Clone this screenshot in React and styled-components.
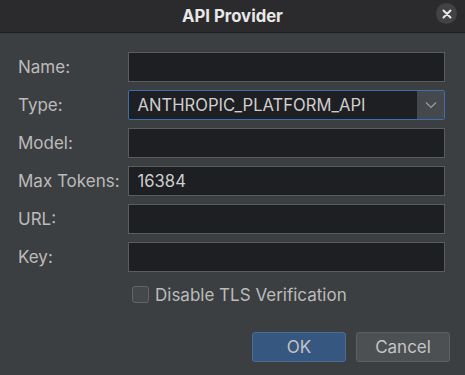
import React from 'react'
import styled, { createGlobalStyle } from 'styled-components'

const GlobalStyle = createGlobalStyle`
  html, body {
    margin: 0;
    padding: 0;
    background: #3c3f41;
  }
  body {
    font-family: Inter, "Noto Sans", sans-serif;
  }
`

const Window = styled.div`
  width: 465px;
  height: 375px;
  background: #3c3f41;
  display: flex;
  flex-direction: column;
  overflow: hidden;
`

const TitleBar = styled.div`
  height: 32px;
  flex: none;
  background: #2b2b2d;
  border-bottom: 1px solid #1f1f21;
  display: flex;
  align-items: center;
  justify-content: center;
  position: relative;
`

const Title = styled.div`
  color: #e8e8e8;
  font-size: 16.7px;
  font-weight: 700;
`

const CloseButton = styled.div`
  position: absolute;
  right: 8px;
  top: 3px;
  width: 21px;
  height: 21px;
  border-radius: 50%;
  background: #424245;
  display: flex;
  align-items: center;
  justify-content: center;
`

const Form = styled.div`
  padding: 19px 20px 0 18px;
  display: grid;
  grid-template-columns: auto 1fr;
  column-gap: 8px;
  row-gap: 8px;
`

const Label = styled.div`
  color: #bbbbbb;
  font-size: 17px;
  display: flex;
  align-items: center;
  height: 30px;
`

const Field = styled.div`
  height: 30px;
  box-sizing: border-box;
  background: #1e1f22;
  border: 1px solid ${p => (p.focused ? '#3d6fb0' : '#5a5c60')};
  border-radius: ${p => (p.focused ? '2px' : '0')};
  color: #cfcfcf;
  font-size: 16.6px;
  display: flex;
  align-items: center;
  padding-left: 9px;
`

const FieldText = styled.span`
  flex: 1;
`

const Arrow = styled.div`
  width: 27px;
  align-self: stretch;
  background: #45484c;
  display: flex;
  align-items: center;
  justify-content: center;
`

const CheckRow = styled.label`
  display: flex;
  align-items: center;
  gap: 6px;
  height: 17px;
  margin: 14px 0 0 132px;
  color: #bbbbbb;
  font-size: 17px;
`

const Box = styled.span`
  width: 17px;
  height: 17px;
  box-sizing: border-box;
  border: 1px solid #626567;
  border-radius: 3px;
  background: #44484a;
`

const Buttons = styled.div`
  display: flex;
  justify-content: flex-end;
  gap: 10px;
  padding: 0 15px 0 0;
  margin-top: 29px;
`

const Button = styled.div`
  width: 94px;
  height: 30px;
  box-sizing: border-box;
  border-radius: 3px;
  display: flex;
  align-items: center;
  justify-content: center;
  font-size: 17px;
  color: #c4c4c4;
  background: ${p => (p.primary ? '#365880' : '#4c5052')};
  border: 1px solid ${p => (p.primary ? '#4a6d94' : '#5e6062')};
`

const fields = [
  { label: 'Name:', value: '' },
  { label: 'Type:', value: 'ANTHROPIC_PLATFORM_API', select: true },
  { label: 'Model:', value: '' },
  { label: 'Max Tokens:', value: '16384' },
  { label: 'URL:', value: '' },
  { label: 'Key:', value: '' },
]

export default function App() {
  return (
    <Window>
      <GlobalStyle />
      <TitleBar>
        <Title>API Provider</Title>
        <CloseButton>
          <svg width="10" height="10" viewBox="0 0 10 10">
            <path d="M1.5 1.5 L8.5 8.5 M8.5 1.5 L1.5 8.5" stroke="#e8e8e8" strokeWidth="2" strokeLinecap="round" />
          </svg>
        </CloseButton>
      </TitleBar>
      <Form>
        {fields.map(f => (
          <React.Fragment key={f.label}>
            <Label>{f.label}</Label>
            <Field focused={f.select}>
              <FieldText>{f.value}</FieldText>
              {f.select && (
                <Arrow>
                  <svg width="12" height="8" viewBox="0 0 12 8">
                    <path d="M1 1.5 L6 6.5 L11 1.5" stroke="#9a9ca0" strokeWidth="1.2" fill="none" />
                  </svg>
                </Arrow>
              )}
            </Field>
          </React.Fragment>
        ))}
      </Form>
      <CheckRow>
        <Box />
        Disable TLS Verification
      </CheckRow>
      <Buttons>
        <Button primary>OK</Button>
        <Button>Cancel</Button>
      </Buttons>
    </Window>
  )
}
